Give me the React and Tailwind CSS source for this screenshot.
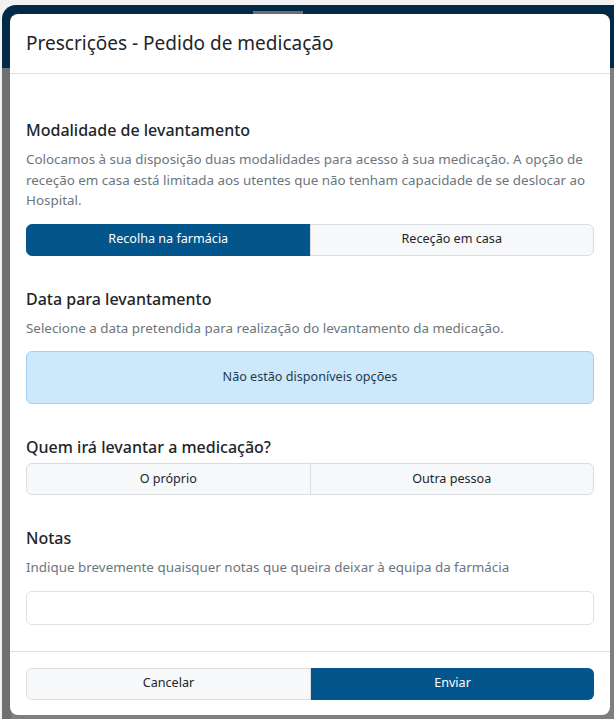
import { useState } from 'react';

function Segmented({ options, value, onChange }) {
    return (
        <div className="flex h-8 w-full">
            {options.map((opt, i) => {
                const active = opt === value;
                const first = i === 0;
                const last = i === options.length - 1;
                return (
                    <button
                        key={opt}
                        onClick={() => onChange(opt)}
                        className={
                            'flex-1 text-[12.6px] border ' +
                            (first ? 'rounded-l-md ' : '-ml-px ') +
                            (last ? 'rounded-r-md ' : '') +
                            (active
                                ? 'bg-[#03568b] border-[#03568b] text-white'
                                : 'bg-[#f7f8fa] border-[#d9dce1] text-[#212529]')
                        }
                    >
                        {opt}
                    </button>
                );
            })}
        </div>
    );
}

function Section({ title, desc, children }) {
    return (
        <section>
            <h3 className="text-[16px] leading-6 font-medium text-[#212529]">{title}</h3>
            <p className="mt-[7px] text-[13.4px] leading-[20.5px] text-[#6c757d]">{desc}</p>
            <div className="mt-[13px]">{children}</div>
        </section>
    );
}

export default function App() {
    const [modality, setModality] = useState('Recolha na farmácia');
    const [who, setWho] = useState(null);
    const [notes, setNotes] = useState('');

    return (
        <div className="relative w-[614px] h-[719px] overflow-hidden bg-[#f2f2f2]" style={{ fontFamily: '"Noto Sans", "Open Sans", sans-serif' }}>
            {/* dimmed page behind the modal */}
            <div className="absolute inset-x-0 top-[5px] bottom-0 flex flex-col pl-[2px]">
                <div className="h-[63px] bg-[#022a46] rounded-tl-[14px]"></div>
                <div className="flex-1 bg-[#7f7f7f] border-l-[9px] border-[#6f6f6f]"></div>
            </div>
            <div className="absolute left-[253px] top-[11px] w-[50px] h-[3px] bg-[#6e6e6e]"></div>

            {/* modal */}
            <div className="absolute left-[10px] top-[14px] w-[600px] h-[701px] bg-white rounded-lg flex flex-col">
                <header className="h-[60px] flex items-center px-4 border-b border-[#dee2e6]">
                    <h2 className="text-[19px] font-normal text-[#212529] -mt-[1px]">Prescrições - Pedido de medicação</h2>
                </header>

                <div className="flex-1 px-4 pt-[44px] flex flex-col gap-[31px]">
                    <Section
                        title="Modalidade de levantamento"
                        desc="Colocamos à sua disposição duas modalidades para acesso à sua medicação. A opção de receção em casa está limitada aos utentes que não tenham capacidade de se deslocar ao Hospital."
                    >
                        <Segmented options={['Recolha na farmácia', 'Receção em casa']} value={modality} onChange={setModality} />
                    </Section>

                    <Section
                        title="Data para levantamento"
                        desc="Selecione a data pretendida para realização do levantamento da medicação."
                    >
                        <div className="h-[53px] rounded-md border border-[#9fd0f4] bg-[#cde8fa] flex items-center justify-center text-[12.6px] text-[#1f3a4d]">
                            Não estão disponíveis opções
                        </div>
                    </Section>

                    <section>
                        <h3 className="text-[16px] leading-6 font-medium text-[#212529]">Quem irá levantar a medicação?</h3>
                        <div className="mt-[4px]">
                            <Segmented options={['O próprio', 'Outra pessoa']} value={who} onChange={setWho} />
                        </div>
                    </section>

                    <Section
                        title="Notas"
                        desc="Indique brevemente quaisquer notas que queira deixar à equipa da farmácia"
                    >
                        <input
                            value={notes}
                            onChange={(e) => setNotes(e.target.value)}
                            className="w-full h-[34px] rounded-md border border-[#dee2e6] px-3 text-[13px] outline-none"
                        />
                    </Section>
                </div>

                <footer className="h-[64px] border-t border-[#dee2e6] px-4 flex items-center">
                    <div className="flex w-full h-8">
                        <button className="flex-1 rounded-l-md border border-[#d9dce1] bg-[#f7f8fa] text-[12.6px] text-[#212529]">Cancelar</button>
                        <button className="flex-1 rounded-r-md bg-[#03568b] text-[12.6px] text-white">Enviar</button>
                    </div>
                </footer>
            </div>
        </div>
    );
}
